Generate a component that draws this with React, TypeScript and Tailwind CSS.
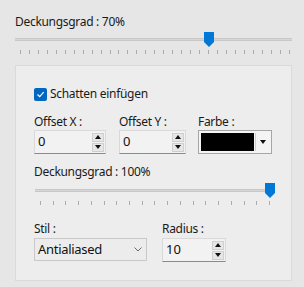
import React from "react";

const font = { fontFamily: "'Noto Sans', 'Open Sans', sans-serif" };

function Slider({ value, width, ticks }: { value: number; width: number; ticks: number }) {
  const thumbLeft = (value / 100) * (width - 6) - 1;
  return (
    <div className="relative h-[24px]" style={{ width }}>
      <div className="absolute left-0 right-0 top-[6px] h-[3px] bg-[#d6d6d6] border-y border-[#c8c8c8]" />
      <svg
        className="absolute top-0"
        style={{ left: thumbLeft }}
        width="10"
        height="15"
        viewBox="0 0 10 15"
      >
        <path d="M0 0 H10 V10 L5 15 L0 10 Z" fill="#0078d7" />
      </svg>
      <div className="absolute left-[5px] right-[2px] top-[18px] flex justify-between">
        {Array.from({ length: ticks }).map((_, i) => (
          <div key={i} className="w-px h-[4px] bg-[#ababab]" />
        ))}
      </div>
    </div>
  );
}

function SpinBox({ value, width }: { value: string; width: number }) {
  return (
    <div
      className="h-[24px] flex items-center border border-[#d9d9d9] border-b-[#8a8a8a] bg-[#f2f2f2] pl-[3px] pr-[1px]"
      style={{ width }}
    >
      <span className="flex-1 text-[13px] text-[#111]">{value}</span>
      <div className="flex flex-col gap-[1px]">
        <div className="w-[12px] h-[9px] bg-[#e6e6e6] border border-[#cfcfcf] flex items-center justify-center">
          <svg width="6" height="4" viewBox="0 0 6 4">
            <path d="M3 0 L6 4 H0 Z" fill="#111" />
          </svg>
        </div>
        <div className="w-[12px] h-[9px] bg-[#e6e6e6] border border-[#cfcfcf] flex items-center justify-center">
          <svg width="6" height="4" viewBox="0 0 6 4">
            <path d="M0 0 H6 L3 4 Z" fill="#111" />
          </svg>
        </div>
      </div>
    </div>
  );
}

function Label({ children }: { children: React.ReactNode }) {
  return (
    <div className="h-[16px] leading-[16px] text-[12px] tracking-[-0.3px] text-[#1a1a1a]">{children}</div>
  );
}

export default function App() {
  return (
    <div className="w-[304px] h-[287px] bg-[#e6e6e6] pt-[14px] pl-[15px] overflow-hidden" style={font}>
      <Label>Deckungsgrad : 70%</Label>
      <div className="mt-[2px]">
        <Slider value={70} width={277} ticks={31} />
      </div>

      <div className="mt-[9px] w-[277px] h-[216px] bg-[#ededed] border border-[#dadada] pl-[18px] pt-[20px]">
        <div className="flex items-center gap-[3px] h-[16px]">
          <div className="w-[13px] h-[13px] rounded-[2px] bg-[#0067c0] flex items-center justify-center">
            <svg width="9" height="9" viewBox="0 0 9 9">
              <path d="M1.5 4.5 L3.7 6.7 L7.7 2.2" stroke="white" strokeWidth="1.2" fill="none" />
            </svg>
          </div>
          <span className="text-[12px] tracking-[-0.3px] text-[#1a1a1a]">Schatten einfügen</span>
        </div>

        <div className="mt-[12px] flex">
          <div className="w-[85px]">
            <Label>Offset X :</Label>
            <SpinBox value="0" width={72} />
          </div>
          <div className="w-[79px]">
            <Label>Offset Y :</Label>
            <SpinBox value="0" width={67} />
          </div>
          <div>
            <Label>Farbe :</Label>
            <div className="w-[74px] h-[24px] border border-[#a6a6a6] bg-[#f4f4f4] flex items-stretch p-[2px] gap-[1px]">
              <div className="flex-1 bg-black" />
              <div className="w-[14px] flex items-center justify-center border-l border-[#cfcfcf]">
                <svg width="6" height="4" viewBox="0 0 6 4">
                  <path d="M0 0 H6 L3 4 Z" fill="#111" />
                </svg>
              </div>
            </div>
          </div>
        </div>

        <div className="mt-[10px]">
          <Label>Deckungsgrad : 100%</Label>
        </div>
        <div className="mt-[3px] ml-px">
          <Slider value={100} width={237} ticks={19} />
        </div>

        <div className="mt-[14px] flex">
          <div className="w-[128px]">
            <Label>Stil :</Label>
            <div className="mt-px w-[113px] h-[23px] border border-[#c9c9c9] bg-[#ececec] flex items-center pl-[3px] pr-[4px]">
              <span className="flex-1 text-[13px] tracking-[-0.3px] text-[#111]">Antialiased</span>
              <svg width="8" height="5" viewBox="0 0 8 5">
                <path d="M0.5 0.5 L4 4 L7.5 0.5" stroke="#6a6a6a" strokeWidth="1" fill="none" />
              </svg>
            </div>
          </div>
          <div>
            <Label>Radius :</Label>
            <div className="mt-px">
              <SpinBox value="10" width={64} />
            </div>
          </div>
        </div>
      </div>
    </div>
  );
}
